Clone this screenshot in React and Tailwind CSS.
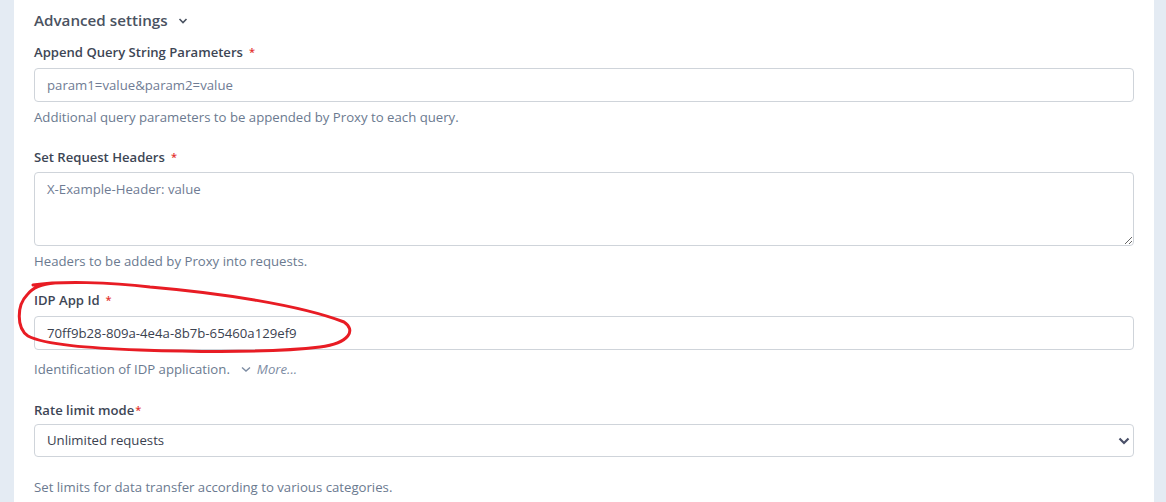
import React from 'react'

const font = { fontFamily: '"Open Sans", "Noto Sans", sans-serif' }

function Label({ children, tight }) {
  return (
    <label className="block text-[13.1px] leading-[20px] font-semibold text-[#3d4655]">
      {children}
      <span className={`text-[#e3342f] text-[11px] align-top ${tight ? 'ml-[1px]' : 'ml-[6px]'}`}>*</span>
    </label>
  )
}

function Help({ children, className = '' }) {
  return <p className={`text-[13.2px] leading-[20px] text-[#6b7a90] ${className}`}>{children}</p>
}

export default function App() {
  return (
    <div className="flex h-[502px] w-full bg-[#e4ebf3] overflow-hidden" style={font}>
      <div className="w-[14px] shrink-0" />
      <div className="relative flex-1 bg-white px-[20px] pt-[8px]">
        {/* Advanced settings header */}
        <div className="flex items-center gap-[10px] h-[24px] text-[15.2px] font-semibold text-[#4a5261]">
          <span>Advanced settings</span>
          <svg width="10" height="8" viewBox="0 0 10 8" className="mt-[1px]">
            <path d="M1.5 2 L5 5.5 L8.5 2" fill="none" stroke="#4a5261" strokeWidth="1.6" />
          </svg>
        </div>

        <div className="mt-[10px]">
          <Label>Append Query String Parameters</Label>
          <input
            className="mt-[6px] block w-full h-[34px] rounded-[4px] border border-[#cfd4da] px-[12px] text-[13.2px] text-[#3b4250] placeholder-[#6f7c94] outline-none"
            placeholder="param1=value&param2=value"
          />
          <Help className="mt-[5px]">Additional query parameters to be appended by Proxy to each query.</Help>
        </div>

        <div className="mt-[20px]">
          <Label>Set Request Headers</Label>
          <textarea
            className="mt-[5px] block w-full h-[74px] rounded-[4px] border border-[#cfd4da] px-[12px] py-[6px] text-[13.2px] leading-[20px] text-[#3b4250] placeholder-[#6f7c94] outline-none"
            placeholder="X-Example-Header: value"
          />
          <Help className="mt-[5px]">Headers to be added by Proxy into requests.</Help>
        </div>

        <div className="mt-[19px]">
          <Label>IDP App Id</Label>
          <input
            className="mt-[6px] block w-full h-[34px] rounded-[4px] border border-[#cfd4da] px-[12px] text-[13.2px] text-[#3b4250] outline-none"
            defaultValue="70ff9b28-809a-4e4a-8b7b-65460a129ef9"
          />
          <div className="mt-[9px] flex items-center text-[13.2px] leading-[20px]">
            <span className="text-[#6b7a90]">Identification of IDP application.</span>
            <span className="ml-[11px] flex items-center gap-[6px] text-[#7d8ca3]">
              <svg width="10" height="7" viewBox="0 0 10 7">
                <path d="M1 1.5 L5 5 L9 1.5" fill="none" stroke="#7d8ca3" strokeWidth="1.4" />
              </svg>
              <i>More...</i>
            </span>
          </div>
        </div>

        <div className="mt-[21px]">
          <Label tight>Rate limit mode</Label>
          <div className="relative mt-[4px] h-[33px] rounded-[4px] border border-[#cfd4da] flex items-center px-[12px] text-[13.2px] text-[#3b4250]">
            <span>Unlimited requests</span>
            <svg width="12" height="8" viewBox="0 0 12 8" className="absolute right-[3px] top-[12px]">
              <path d="M1.5 1.5 L6 6 L10.5 1.5" fill="none" stroke="#4a5068" strokeWidth="2.2" />
            </svg>
          </div>
          <Help className="mt-[20px]">Set limits for data transfer according to various categories.</Help>
        </div>

        {/* hand-drawn annotation */}
        <svg className="absolute left-[-14px] top-0 pointer-events-none" width="400" height="370" viewBox="0 0 400 370">
          <path
            d="M33 285 C 60 281, 110 282, 150 287 C 220 293, 300 305, 344 322 C 356 330, 350 343, 320 347 C 270 353, 200 352, 140 350 C 90 348, 45 345, 28 336 C 16 328, 17 305, 27 295 C 32 288, 40 284, 55 283"
            fill="none"
            stroke="#e81c24"
            strokeWidth="3"
            strokeLinecap="round"
          />
        </svg>
      </div>
      <div className="w-[12px] shrink-0" />
    </div>
  )
}
